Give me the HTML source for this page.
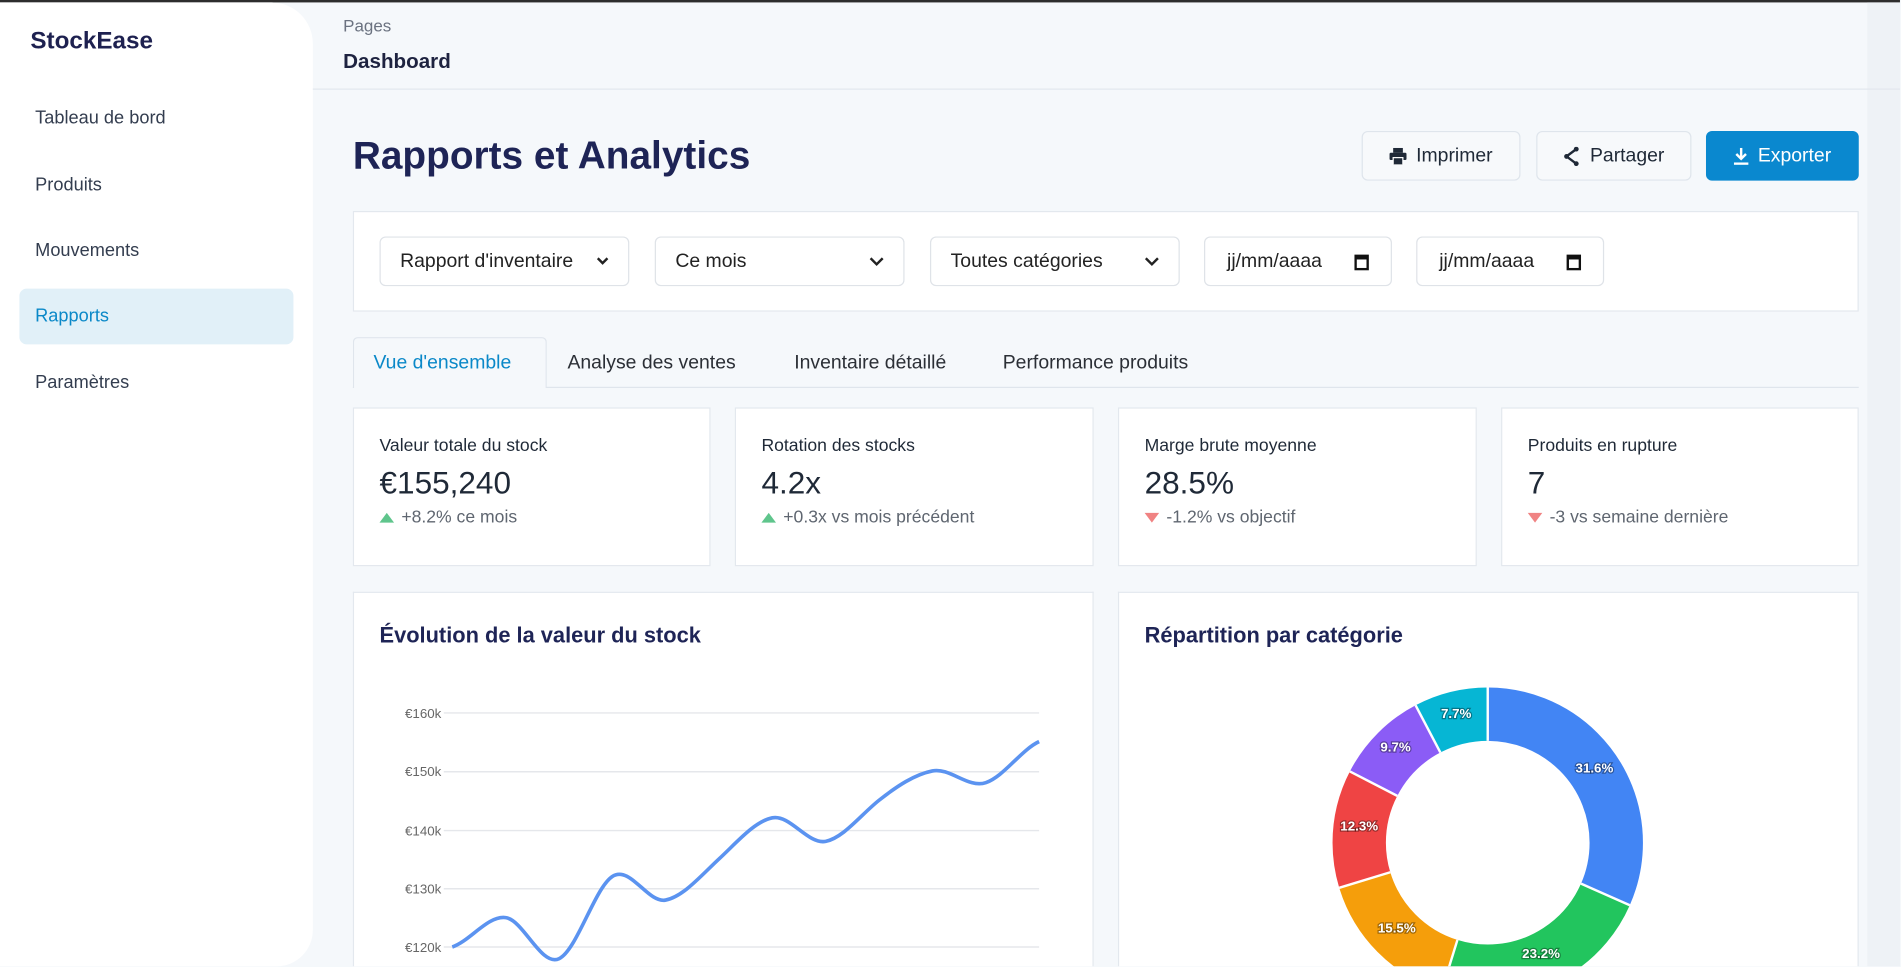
<!DOCTYPE html>
<html><head><meta charset="utf-8"><style>
*{box-sizing:border-box;margin:0;padding:0}
html,body{width:1901px;height:967px;overflow:hidden;background:#f5f8fb;font-family:"Liberation Sans",sans-serif}
#w{position:absolute;left:0;top:0;width:1567px;height:797px;overflow:hidden;transform:scale(1.2125);transform-origin:0 0;background:#f5f8fb}
.a{position:absolute}
.nav{position:absolute;left:29px;font-size:15px;color:#333d4f}
.btn{position:absolute;top:108px;height:41px;border:1px solid #dfe5ec;border-radius:5px;background:#f7f9fb;font-size:16px;color:#1f2937;display:flex;align-items:center;justify-content:center;gap:8px;font-weight:500}
.sel{position:absolute;top:195px;height:41px;border:1px solid #dfe3e8;border-radius:5px;background:#fff;font-size:16px;color:#222;display:flex;align-items:center;padding:0 16px;justify-content:space-between}
.card{position:absolute;background:#fff;border:1px solid #e3e8ee}
.lab{position:absolute;left:21px;top:23px;font-size:14.5px;color:#1f2937}
.val{position:absolute;left:21px;top:46px;font-size:26px;color:#1f2937}
.chg{position:absolute;left:21px;top:82px;font-size:14.5px;color:#5f6670}
.up{display:inline-block;width:0;height:0;border-left:6px solid transparent;border-right:6px solid transparent;border-bottom:8px solid #5fc58c;margin-right:6px}
.dn{display:inline-block;width:0;height:0;border-left:6px solid transparent;border-right:6px solid transparent;border-top:8px solid #f08383;margin-right:6px}
.tab{position:absolute;top:291px;font-size:16px;color:#2b2f36}
.ttl{position:absolute;top:514px;font-size:18px;font-weight:bold;color:#1e2456}
</style></head><body><div id="w">
<div class="a" style="left:0;top:0;width:1567px;height:2px;background:#2d2d2d"></div>
<div class="a" style="left:1540px;top:2px;width:27px;height:795px;background:#eef2f6"></div>
<div class="a" style="left:0;top:2px;width:258px;height:795px;background:#fff;border-radius:0 34px 30px 0"></div>
<div class="a" style="left:25px;top:23px;font-size:20px;font-weight:bold;color:#1e2150">StockEase</div>
<div class="nav" style="top:89px">Tableau de bord</div>
<div class="nav" style="top:144px">Produits</div>
<div class="nav" style="top:198px">Mouvements</div>
<div class="a" style="left:16px;top:238px;width:226px;height:46px;background:#e1f0f8;border-radius:6px"></div>
<div class="nav" style="top:252px;color:#0a88c8">Rapports</div>
<div class="nav" style="top:307px">Paramètres</div>
<div class="a" style="left:258px;top:73px;width:1309px;height:1px;background:#e2e7ee"></div>
<div class="a" style="left:283px;top:13px;font-size:14px;color:#6b7280">Pages</div>
<div class="a" style="left:283px;top:41px;font-size:17px;font-weight:bold;color:#1e2340">Dashboard</div>
<div class="a" style="left:291px;top:110px;font-size:32px;font-weight:bold;color:#1e2456">Rapports et Analytics</div>
<div class="btn" style="left:1123px;width:131px"><svg width="14" height="14" viewBox="0 0 14 14"><rect x="3" y="0" width="8" height="4" fill="#1f2937"/><rect x="0" y="4" width="14" height="6" rx="1" fill="#1f2937"/><rect x="3" y="8" width="8" height="6" fill="#1f2937" stroke="#fff" stroke-width="1"/></svg>Imprimer</div>
<div class="btn" style="left:1267px;width:128px"><svg width="14" height="16" viewBox="0 0 14 16"><path d="M11 2 L3 8 L11 14" stroke="#1f2937" stroke-width="2" fill="none"/><circle cx="11" cy="2" r="2" fill="#1f2937"/><circle cx="3" cy="8" r="2" fill="#1f2937"/><circle cx="11" cy="14" r="2" fill="#1f2937"/></svg>Partager</div>
<div class="btn" style="left:1407px;width:126px;background:#0a88cf;border-color:#0a88cf;color:#fff"><svg width="12" height="14" viewBox="0 0 12 14"><path d="M6 0V8M2 5l4 4 4-4" stroke="#fff" stroke-width="2" fill="none"/><rect x="0" y="12" width="12" height="2" fill="#fff"/></svg>Exporter</div>
<div class="card" style="left:291px;top:174px;width:1242px;height:83px"></div>
<div class="sel" style="left:313px;width:206px"><span>Rapport d'inventaire</span><svg width="10" height="7"><path d="M1 1l4 4 4-4" stroke="#222" stroke-width="2" fill="none"/></svg></div>
<div class="sel" style="left:540px;width:206px"><span>Ce mois</span><svg width="12" height="8"><path d="M1 1l5 5 5-5" stroke="#222" stroke-width="2" fill="none"/></svg></div>
<div class="sel" style="left:767px;width:206px"><span>Toutes catégories</span><svg width="12" height="8"><path d="M1 1l5 5 5-5" stroke="#222" stroke-width="2" fill="none"/></svg></div>
<div class="sel" style="left:993px;width:155px;padding:0 18px"><span>jj/mm/aaaa</span><svg width="12" height="14"><rect x="1" y="2" width="10" height="11" fill="none" stroke="#111" stroke-width="2"/><rect x="1" y="2" width="10" height="3" fill="#111"/></svg></div>
<div class="sel" style="left:1168px;width:155px;padding:0 18px"><span>jj/mm/aaaa</span><svg width="12" height="14"><rect x="1" y="2" width="10" height="11" fill="none" stroke="#111" stroke-width="2"/><rect x="1" y="2" width="10" height="3" fill="#111"/></svg></div>
<div class="a" style="left:291px;top:319px;width:1242px;height:1px;background:#dfe5ec"></div>
<div class="a" style="left:291px;top:278px;width:160px;height:42px;border:1px solid #dfe5ec;border-bottom:none;border-radius:4px 4px 0 0;background:#f5f8fb"></div>
<div class="tab" style="left:308px;color:#0a88c8">Vue d'ensemble</div>
<div class="tab" style="left:468px">Analyse des ventes</div>
<div class="tab" style="left:655px">Inventaire détaillé</div>
<div class="tab" style="left:827px">Performance produits</div>
<div class="card" style="left:291px;top:336px;width:295px;height:131px"><div class="lab">Valeur totale du stock</div><div class="val">€155,240</div><div class="chg"><span class="up"></span>+8.2% ce mois</div></div>
<div class="card" style="left:606px;top:336px;width:296px;height:131px"><div class="lab">Rotation des stocks</div><div class="val">4.2x</div><div class="chg"><span class="up"></span>+0.3x vs mois précédent</div></div>
<div class="card" style="left:922px;top:336px;width:296px;height:131px"><div class="lab">Marge brute moyenne</div><div class="val">28.5%</div><div class="chg"><span class="dn"></span>-1.2% vs objectif</div></div>
<div class="card" style="left:1238px;top:336px;width:295px;height:131px"><div class="lab">Produits en rupture</div><div class="val">7</div><div class="chg"><span class="dn"></span>-3 vs semaine dernière</div></div>
<div class="card" style="left:291px;top:488px;width:611px;height:309px;border-bottom:none"></div>
<div class="card" style="left:922px;top:488px;width:611px;height:309px;border-bottom:none"></div>
<div class="ttl" style="left:313px">Évolution de la valeur du stock</div>
<div class="ttl" style="left:944px">Répartition par catégorie</div>
<svg class="a" style="left:0;top:0" width="1567" height="797">
<g stroke="#e5e7eb" stroke-width="1.2"><line x1="366" y1="588" x2="857" y2="588"/><line x1="366" y1="636.5" x2="857" y2="636.5"/><line x1="366" y1="685" x2="857" y2="685"/><line x1="366" y1="733" x2="857" y2="733"/><line x1="366" y1="781" x2="857" y2="781"/></g>
<g font-family="Liberation Sans,sans-serif" font-size="11" fill="#666" text-anchor="end"><text x="364" y="592">€160k</text><text x="364" y="640">€150k</text><text x="364" y="689">€140k</text><text x="364" y="737">€130k</text><text x="364" y="785">€120k</text></g>
<path d="M373,781 C387.67,776.16 402.33,754.86 417,756.8 C431.67,758.74 446.33,797.48 461,790.7 C475.67,783.92 490.33,732.58 505,722.9 C519.67,713.22 534.33,745.2 549,742.3 C563.67,739.4 578.33,721.96 593,708.4 C607.67,694.84 622.33,677.4 637,674.5 C651.67,671.6 666.33,696.8 681,693.9 C695.67,691 710.33,671.62 725,660 C739.67,648.38 754.33,638.7 769,635.8 C783.67,632.9 798.33,650.34 813,645.5 C827.67,640.66 842.33,618.38 857,611.6" fill="none" stroke="#5b93f0" stroke-width="3"/>
<g transform="rotate(-90 1227 695)" fill="none" stroke-width="44">
<circle cx="1227" cy="695" r="106" stroke="#4285f4" stroke-dasharray="210.5 456" stroke-dashoffset="0"/>
<circle cx="1227" cy="695" r="106" stroke="#22c55e" stroke-dasharray="154.5 512" stroke-dashoffset="-210.5"/>
<circle cx="1227" cy="695" r="106" stroke="#f59e0b" stroke-dasharray="103.2 563" stroke-dashoffset="-365"/>
<circle cx="1227" cy="695" r="106" stroke="#ef4444" stroke-dasharray="81.9 585" stroke-dashoffset="-468.2"/>
<circle cx="1227" cy="695" r="106" stroke="#8b5cf6" stroke-dasharray="64.6 602" stroke-dashoffset="-550.1"/>
<circle cx="1227" cy="695" r="106" stroke="#06b6d4" stroke-dasharray="51.3 615" stroke-dashoffset="-614.7"/>
</g>
<g stroke="#fff" stroke-width="2"><line x1="1227" y1="611" x2="1227" y2="566"/><line x1="1303.9" y1="728.8" x2="1344.2" y2="746.6"/><line x1="1202" y1="775.2" x2="1189" y2="817.2"/><line x1="1146.6" y1="719.4" x2="1104.5" y2="732.2"/><line x1="1152.4" y1="656.4" x2="1113.3" y2="636.2"/><line x1="1187.9" y1="620.6" x2="1167.5" y2="581.7"/></g>
<g font-family="Liberation Sans,sans-serif" font-size="11" font-weight="bold" fill="#fff" text-anchor="middle" style="paint-order:stroke" stroke="rgba(0,0,0,.35)" stroke-width="2"><text x="1315" y="637">31.6%</text><text x="1271" y="790">23.2%</text><text x="1152" y="769">15.5%</text><text x="1121" y="685">12.3%</text><text x="1151" y="620">9.7%</text><text x="1201" y="592">7.7%</text></g>
</svg>
</div></body></html>
